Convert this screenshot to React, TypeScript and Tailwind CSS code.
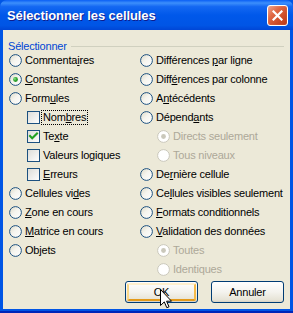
import React, { useId } from "react";

function Radio({ checked = false, disabled = false }: { checked?: boolean; disabled?: boolean }) {
  const id = useId().replace(/:/g, "");
  return (
    <svg width="13" height="13" viewBox="0 0 13 13" className="shrink-0 block">
      <defs>
        <linearGradient id={`rg${id}`} x1="0" y1="0" x2="1" y2="1">
          <stop offset="0" stopColor="#DCD9C5" />
          <stop offset="0.45" stopColor="#F5F4EE" />
          <stop offset="1" stopColor="#FFFFFF" />
        </linearGradient>
        <radialGradient id={`rd${id}`} cx="0.35" cy="0.35" r="0.7">
          <stop offset="0" stopColor="#8CE58A" />
          <stop offset="0.6" stopColor="#2FA52E" />
          <stop offset="1" stopColor="#1D8E1D" />
        </radialGradient>
      </defs>
      <circle
        cx="6.5"
        cy="6.5"
        r="5.9"
        fill={disabled ? "#FFFFFF" : `url(#rg${id})`}
        stroke={disabled ? "#CAC8BB" : "#1C5180"}
        strokeWidth="1"
      />
      {checked && (
        <circle cx="6.5" cy="6.5" r="2.4" fill={disabled ? "#CAC8BB" : `url(#rd${id})`} />
      )}
    </svg>
  );
}

function Check({ checked = false }: { checked?: boolean }) {
  const id = useId().replace(/:/g, "");
  return (
    <svg width="13" height="13" viewBox="0 0 13 13" className="shrink-0 block">
      <defs>
        <linearGradient id={`cg${id}`} x1="0" y1="0" x2="1" y2="1">
          <stop offset="0" stopColor="#DCDCD7" />
          <stop offset="1" stopColor="#FFFFFF" />
        </linearGradient>
      </defs>
      <rect x="0.5" y="0.5" width="12" height="12" fill={`url(#cg${id})`} stroke="#1C5180" />
      {checked && (
        <path d="M3 6 L5.2 8.3 L10 3.4" fill="none" stroke="#21A121" strokeWidth="2.1" strokeLinecap="square" />
      )}
    </svg>
  );
}

function L({ t, u }: { t: string; u?: number }) {
  if (u === undefined) return <>{t}</>;
  return (
    <>
      {t.slice(0, u)}
      <span className="underline underline-offset-[1px] decoration-[1px]">{t[u]}</span>
      {t.slice(u + 1)}
    </>
  );
}

function RRow({ t, u, checked, disabled, indent = 0 }: { t: string; u?: number; checked?: boolean; disabled?: boolean; indent?: number }) {
  return (
    <div className="h-[19px] flex items-center" style={indent ? { paddingLeft: indent } : undefined}>
      <Radio checked={checked} disabled={disabled} />
      <span className={`ml-[3px] whitespace-nowrap ${disabled ? "text-[#ACA899]" : "text-black"}`}>
        <L t={t} u={u} />
      </span>
    </div>
  );
}

function CRow({ t, u, checked, focus }: { t: string; u?: number; checked?: boolean; focus?: boolean }) {
  return (
    <div className="h-[19px] flex items-center pl-[18px]">
      <Check checked={checked} />
      <span
        className={`ml-[1px] px-[1px] leading-[13px] whitespace-nowrap border ${
          focus ? "border-dotted border-black" : "border-transparent"
        }`}
      >
        <L t={t} u={u} />
      </span>
    </div>
  );
}

export default function App() {
  return (
    <div className="w-[293px] h-[313px] relative overflow-hidden bg-[#0055E5] flex flex-col font-['Liberation_Sans',Arial,sans-serif] text-[11px] tracking-[-0.2px] select-none">
      {/* Title bar */}
      <div className="h-[30px] shrink-0 flex items-center pl-[7px] pr-[5px] rounded-t-[7px] bg-[linear-gradient(to_bottom,#0A5FF5_0%,#3D8FFB_10%,#1468F2_22%,#0058EA_50%,#0055E5_85%,#0046D6_100%)]">
        <div className="flex-1 text-white font-bold text-[13px] tracking-[-0.1px] [text-shadow:1px_1px_#0F1C8C] whitespace-nowrap pt-[1px]">
          Sélectionner les cellules
        </div>
        <div className="w-[21px] h-[21px] rounded-[3px] border border-white bg-[linear-gradient(135deg,#EDA48C_0%,#E06844_35%,#CC4A26_70%,#B8381A_100%)] flex items-center justify-center shadow-[inset_0_0_1px_#ffffff80]">
          <svg width="11" height="11" viewBox="0 0 11 11">
            <path d="M1.5 1.5 L9.5 9.5 M9.5 1.5 L1.5 9.5" stroke="white" strokeWidth="2.2" strokeLinecap="square" />
          </svg>
        </div>
      </div>

      {/* Client area */}
      <div className="flex-1 mx-[3px] mb-[4px] bg-[#ECE9D8] flex flex-col">
        <div className="pt-[6px] h-[21px] flex items-center pl-[5px] pr-[6px]">
          <span className="text-[#0046D5] mt-[6px] leading-[15px]">Sélectionner</span>
          <div className="flex-1 h-px bg-[#D0D0BF] ml-[4px] mt-[6px]" />
        </div>
        <div className="flex pl-[6px]">
          <div className="w-[131px] flex flex-col">
            <RRow t="Commentaires" u={8} />
            <RRow t="Constantes" u={0} checked />
            <RRow t="Formules" u={4} />
            <CRow t="Nombres" u={3} focus />
            <CRow t="Texte" u={2} checked />
            <CRow t="Valeurs logiques" />
            <CRow t="Erreurs" u={0} />
            <RRow t="Cellules vides" u={11} />
            <RRow t="Zone en cours" u={0} />
            <RRow t="Matrice en cours" u={0} />
            <RRow t="Objets" u={2} />
          </div>
          <div className="flex-1 flex flex-col">
            <RRow t="Différences par ligne" u={12} />
            <RRow t="Différences par colonne" u={4} />
            <RRow t="Antécédents" u={1} />
            <RRow t="Dépendants" u={6} />
            <RRow t="Directs seulement" checked disabled indent={17} />
            <RRow t="Tous niveaux" disabled indent={17} />
            <RRow t="Dernière cellule" u={2} />
            <RRow t="Cellules visibles seulement" u={2} />
            <RRow t="Formats conditionnels" u={0} />
            <RRow t="Validation des données" u={0} />
            <RRow t="Toutes" checked disabled indent={17} />
            <RRow t="Identiques" disabled indent={17} />
          </div>
        </div>
        <div className="flex justify-end gap-[13px] pr-[6px] mt-[2px]">
          <div className="w-[73px] h-[22px] rounded-[3px] border border-[#003C74] bg-[linear-gradient(to_bottom,#FFFFFF_0%,#F4F3EE_50%,#E6E3D6_90%,#D6D0C5_100%)] p-[1px]">
            <div className="w-full h-full rounded-[2px] border-2 border-t-[#FFF0CF] border-l-[#F9D88A] border-r-[#F5BB4A] border-b-[#E59A19] flex items-center justify-center text-black">
              OK
            </div>
          </div>
          <div className="w-[73px] h-[22px] rounded-[3px] border border-[#003C74] bg-[linear-gradient(to_bottom,#FFFFFF_0%,#F4F3EE_50%,#E6E3D6_90%,#D6D0C5_100%)] flex items-center justify-center text-black">
            Annuler
          </div>
        </div>
      </div>
      <div className="absolute left-0 right-0 bottom-0 h-[2px] bg-[#0026B8]" />

      {/* Mouse cursor */}
      <svg className="absolute left-[160px] top-[289px]" width="13" height="21" viewBox="0 0 13 21">
        <path
          d="M0.5 0.5 L0.5 16.5 L4.3 12.9 L6.8 18.7 L9 17.8 L6.6 12.2 L11.5 12.2 Z"
          fill="white"
          stroke="black"
          strokeWidth="1"
          strokeLinejoin="miter"
        />
      </svg>
    </div>
  );
}
